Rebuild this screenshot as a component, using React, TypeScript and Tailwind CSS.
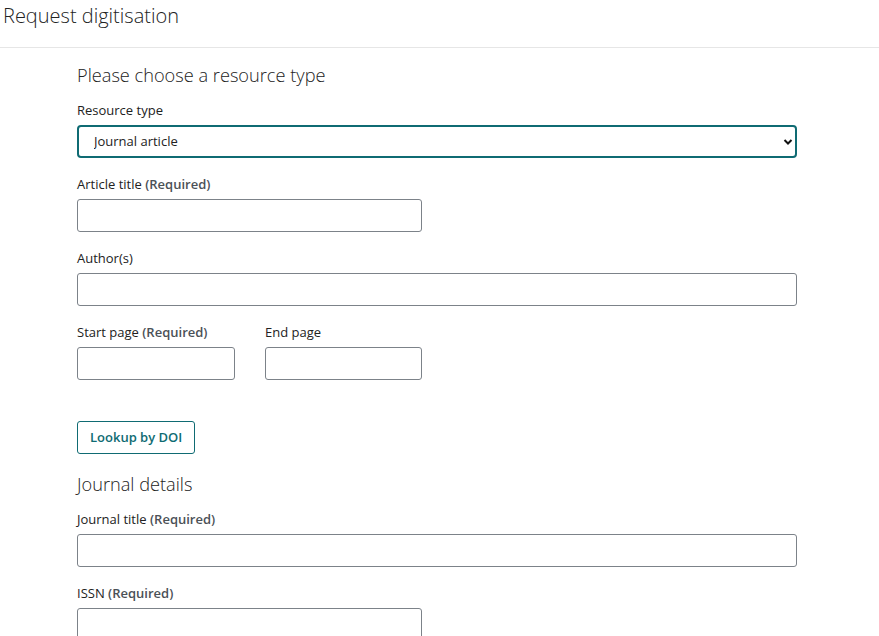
import React from "react";

function Label({ text, req }: { text: string; req?: boolean }) {
  return (
    <label className="block text-[13px] leading-[20px] text-[#222222] mb-[5px]">
      {text}
      {req && <span className="font-semibold text-[#4b5157]"> (Required)</span>}
    </label>
  );
}

function Field({ label, req, w }: { label: string; req?: boolean; w: string }) {
  return (
    <div className="mb-[16px]">
      <Label text={label} req={req} />
      <input
        type="text"
        className={`${w} h-[33px] border border-[#7c8289] rounded-[3px] bg-white px-2 text-[13px] outline-none`}
      />
    </div>
  );
}

export default function App() {
  return (
    <div
      className="min-h-screen bg-white text-[#222222]"
      style={{ fontFamily: '"Open Sans", "Noto Sans", sans-serif' }}
    >
      <div className="h-[48px] border-b border-[#e6e6e6] pl-[3px] pt-[2px]">
        <h1 className="text-[20px] font-light leading-[28px] text-[#222222]">Request digitisation</h1>
      </div>
      <div className="pl-[77px] w-[797px]">
        <h2 className="text-[18.2px] font-light leading-[27px] mt-[14px] mb-[11px]">Please choose a resource type</h2>
        <div className="mb-[16px]">
          <Label text="Resource type" />
          <div className="relative w-[720px]">
            <select className="appearance-none block w-full h-[33px] border-2 border-[#0f6b73] rounded-[4px] bg-white pl-[15px] text-[13px] text-[#222222] outline-none">
              <option>Journal article</option>
            </select>
            <svg
              className="absolute right-[4px] top-[13px] pointer-events-none"
              width="10"
              height="8"
              viewBox="0 0 10 8"
            >
              <path d="M1.5 2 L5 5.5 L8.5 2" stroke="#111" strokeWidth="2" fill="none" />
            </svg>
          </div>
        </div>
        <Field label="Article title" req w="w-[345px]" />
        <Field label="Author(s)" w="w-[720px]" />
        <div className="flex gap-[30px]">
          <Field label="Start page" req w="w-[158px]" />
          <Field label="End page" w="w-[157px]" />
        </div>
        <button className="block mt-[25px] h-[33px] px-[12px] border border-[#0f6b73] rounded-[3px] text-[13px] font-semibold text-[#0f6b73] bg-white">
          Lookup by DOI
        </button>
        <h2 className="text-[18.2px] font-light leading-[27px] mt-[17px] mb-[11px]">Journal details</h2>
        <Field label="Journal title" req w="w-[720px]" />
        <Field label="ISSN" req w="w-[345px]" />
      </div>
    </div>
  );
}
